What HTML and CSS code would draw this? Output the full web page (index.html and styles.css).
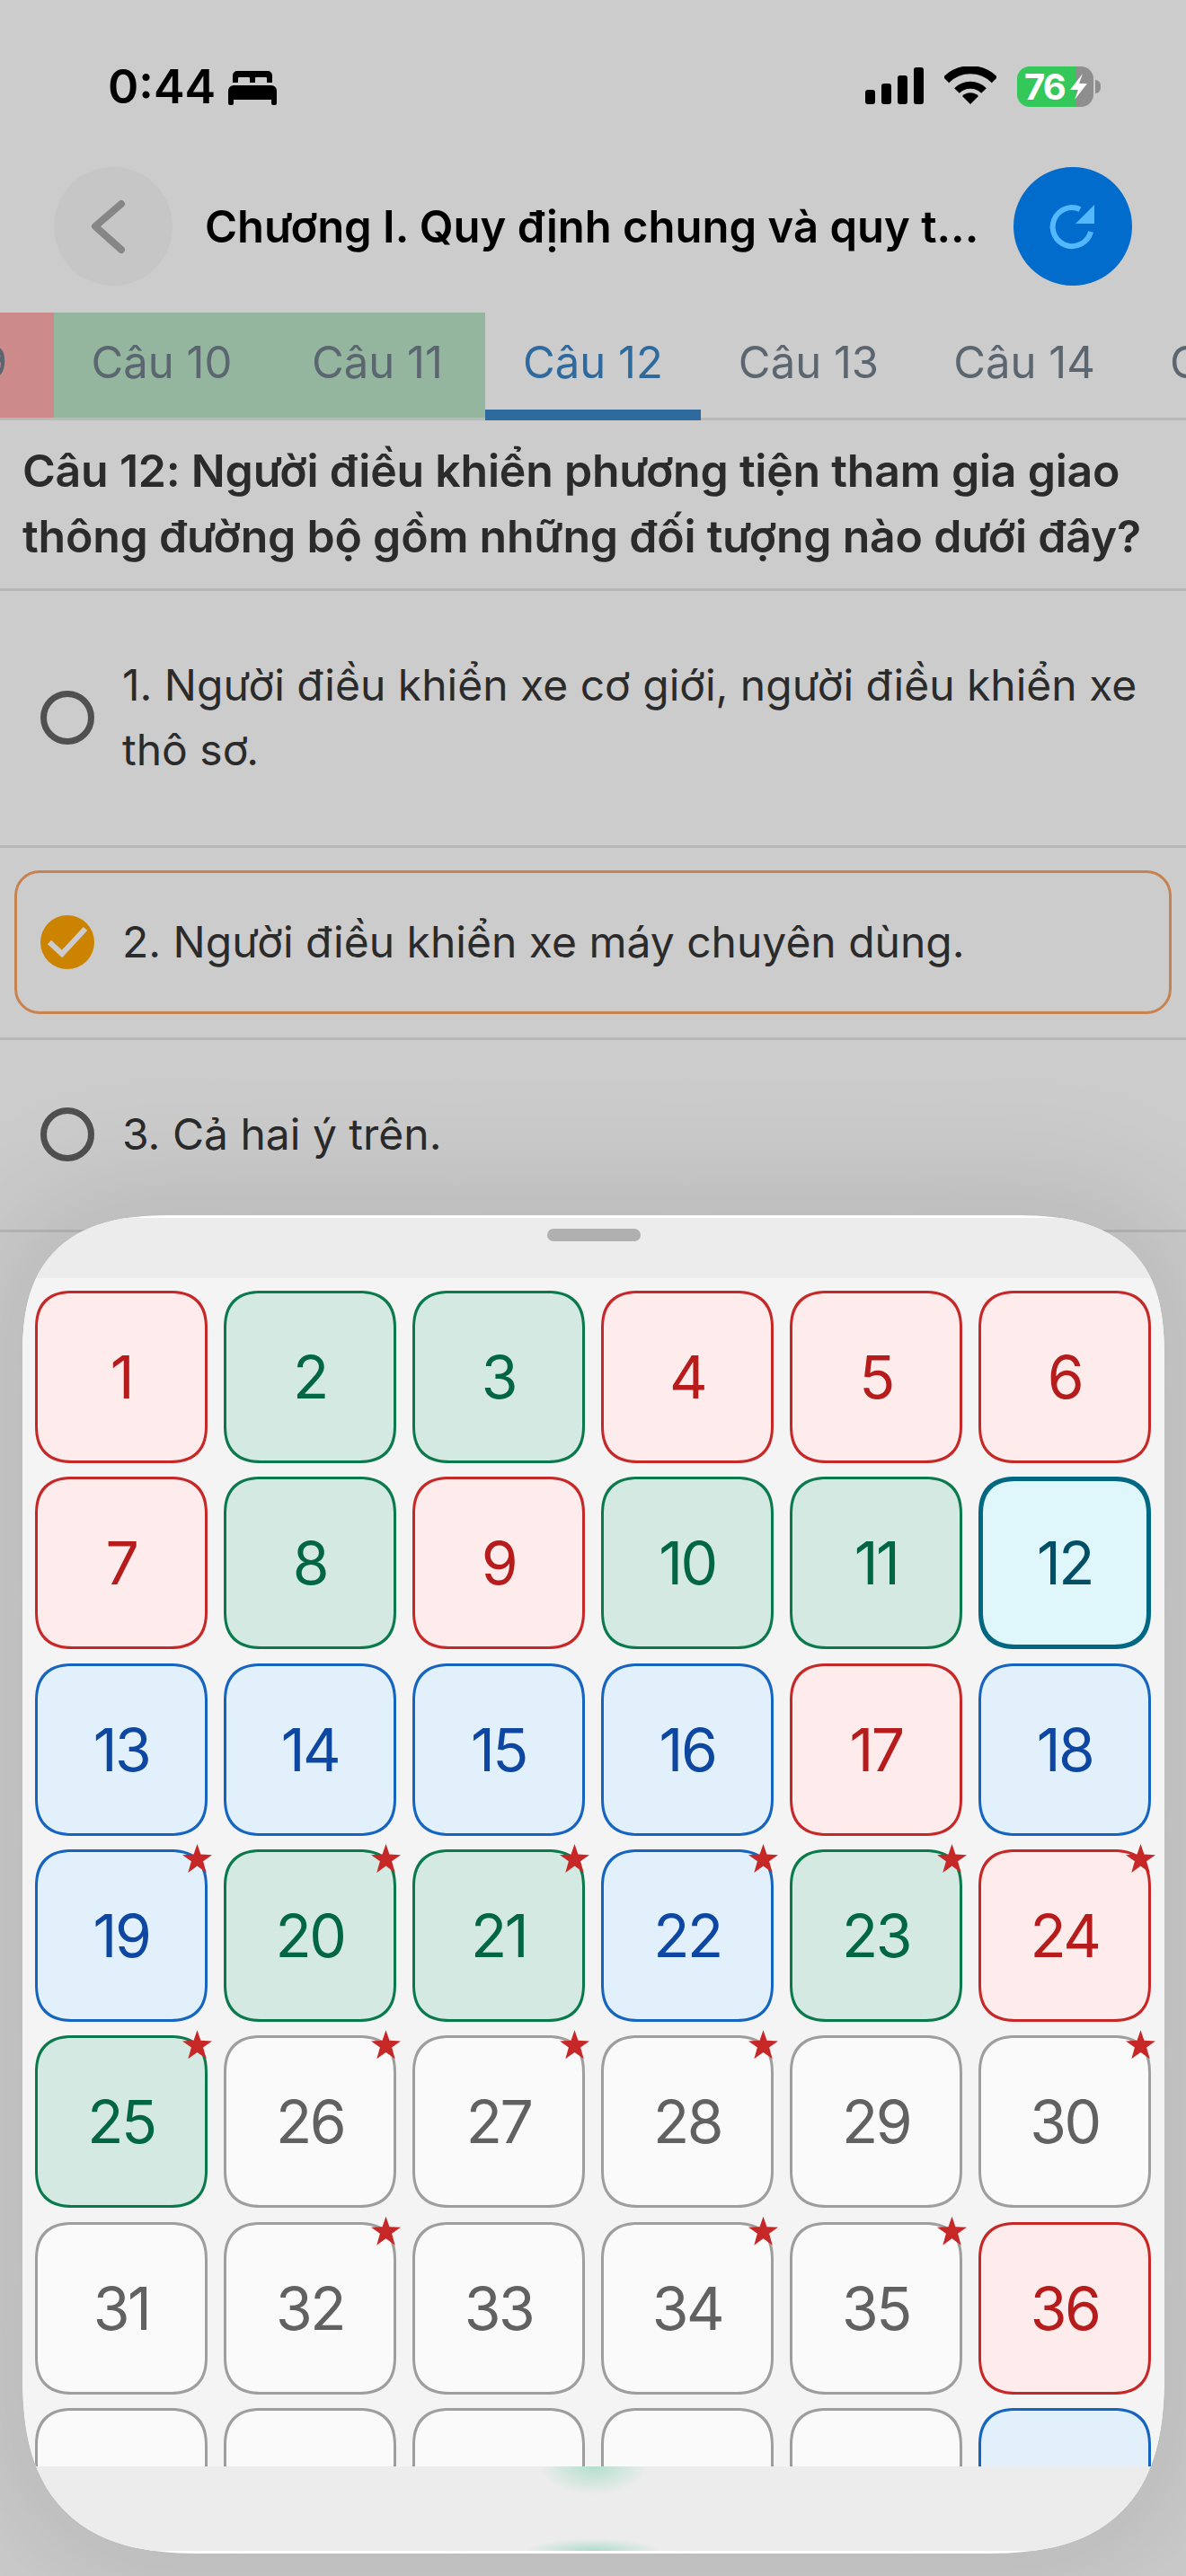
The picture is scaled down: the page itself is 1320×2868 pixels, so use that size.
FILE: index.html
```html
<!DOCTYPE html>
<html lang="vi">
<head>
  <meta charset="UTF-8">
  <title>Chương I. Quy định chung</title>
  <link rel="stylesheet" href="styles.css">
</head>
<body>
  <div class="status-bar">
    <div class="status-left">
      <span class="time">0:44</span>
      <svg class="bed" width="54" height="38" viewBox="0 0 54 38">
        <path fill-rule="evenodd" d="M10 0h34a5 5 0 0 1 5 5v8h-6V8a1 1 0 0 0-1-1H31a1 1 0 0 0-1 1v5h-6V8a1 1 0 0 0-1-1H12a1 1 0 0 0-1 1v5H5V5a5 5 0 0 1 5-5z"/>
        <path d="M6 16h42a6 6 0 0 1 6 6v14a2 2 0 0 1-2 2h-2a2 2 0 0 1-2-2v-4H6v4a2 2 0 0 1-2 2H2a2 2 0 0 1-2-2V22a6 6 0 0 1 6-6z"/>
      </svg>
    </div>
    <div class="status-right">
      <svg width="65" height="41" viewBox="0 0 65 41">
        <rect x="0" y="25" width="11" height="16" rx="3"/>
        <rect x="18" y="18" width="11" height="23" rx="3"/>
        <rect x="36" y="9" width="11" height="32" rx="3"/>
        <rect x="54" y="0" width="11" height="41" rx="3"/>
      </svg>
      <svg class="wifi" width="58" height="42" viewBox="0 0 58 42">
        <path d="M2 15A38 38 0 0 1 56 15" fill="none" stroke="#000" stroke-width="9"/>
        <path d="M14 27A21 21 0 0 1 44 27" fill="none" stroke="#000" stroke-width="8"/>
        <path d="M29 42L20 33A12.7 12.7 0 0 1 38 33Z"/>
      </svg>
      <div class="battery">
        <span class="battery-level">76</span>
        <svg class="bolt" width="85" height="45" viewBox="0 0 85 45">
          <path d="M73 8L59 26H68L64 37L78 19H69Z" fill="#fff"/>
        </svg>
        <i class="battery-nib"></i>
      </div>
    </div>
  </div>

  <div class="nav">
    <div class="round-btn back">
      <svg width="132" height="132" viewBox="0 0 132 132">
        <path d="M75 41L46 66L75 92" fill="none" stroke="#868686" stroke-width="8" stroke-linecap="round" stroke-linejoin="round"/>
      </svg>
    </div>
    <div class="nav-title">Chương I. Quy định chung và quy t...</div>
    <div class="round-btn refresh">
      <svg width="132" height="132" viewBox="0 0 132 132">
        <path d="M86 72A21.5 21.5 0 1 1 74 47" fill="none" stroke="#54b8ff" stroke-width="6"/>
        <path d="M69 63L90 42V63Z" fill="#54b8ff"/>
      </svg>
    </div>
  </div>

  <div class="tabs">
    <div class="tab tab-wrong">Câu 9</div>
    <div class="tab tab-right">Câu 10</div>
    <div class="tab tab-right">Câu 11</div>
    <div class="tab tab-active">Câu 12</div>
    <div class="tab">Câu 13</div>
    <div class="tab">Câu 14</div>
    <div class="tab">Câu 15</div>
  </div>

  <div class="question">Câu 12: Người điều khiển phương tiện tham gia giao thông đường bộ gồm những đối tượng nào dưới đây?</div>

  <div class="answer">
    <div class="option">
      <span class="radio"></span>
      <span class="option-text">1. Người điều khiển xe cơ giới, người điều khiển xe thô sơ.</span>
    </div>
  </div>
  <div class="answer">
    <div class="option selected">
      <svg class="check" width="60" height="60" viewBox="0 0 60 60">
        <circle cx="30" cy="30" r="30" fill="#cc8400"/>
        <path d="M10 30L24 43L50 15" fill="none" stroke="#cccccc" stroke-width="6"/>
      </svg>
      <span class="option-text">2. Người điều khiển xe máy chuyên dùng.</span>
    </div>
  </div>
  <div class="answer">
    <div class="option">
      <span class="radio"></span>
      <span class="option-text">3. Cả hai ý trên.</span>
    </div>
  </div>

  <div class="sheet">
    <div class="sheet-head"><div class="grabber"></div></div>
    <div class="sheet-body">
      <div class="cell red">1</div>
      <div class="cell green">2</div>
      <div class="cell green">3</div>
      <div class="cell red">4</div>
      <div class="cell red">5</div>
      <div class="cell red">6</div>
      <div class="cell red">7</div>
      <div class="cell green">8</div>
      <div class="cell red">9</div>
      <div class="cell green">10</div>
      <div class="cell green">11</div>
      <div class="cell current">12</div>
      <div class="cell blue">13</div>
      <div class="cell blue">14</div>
      <div class="cell blue">15</div>
      <div class="cell blue">16</div>
      <div class="cell red">17</div>
      <div class="cell blue">18</div>
      <div class="cell blue">19<i class="star"></i></div>
      <div class="cell green">20<i class="star"></i></div>
      <div class="cell green">21<i class="star"></i></div>
      <div class="cell blue">22<i class="star"></i></div>
      <div class="cell green">23<i class="star"></i></div>
      <div class="cell red">24<i class="star"></i></div>
      <div class="cell green">25<i class="star"></i></div>
      <div class="cell">26<i class="star"></i></div>
      <div class="cell">27<i class="star"></i></div>
      <div class="cell">28<i class="star"></i></div>
      <div class="cell">29</div>
      <div class="cell">30<i class="star"></i></div>
      <div class="cell">31</div>
      <div class="cell">32<i class="star"></i></div>
      <div class="cell">33</div>
      <div class="cell">34<i class="star"></i></div>
      <div class="cell">35<i class="star"></i></div>
      <div class="cell red">36</div>
      <div class="cell"></div>
      <div class="cell"></div>
      <div class="cell"></div>
      <div class="cell"></div>
      <div class="cell"></div>
      <div class="cell blue"></div>
    </div>
    <div class="sheet-foot"></div>
  </div>
</body>
</html>
```

FILE: styles.css
```css
body {
  margin: 0;
  width: 1320px;
  height: 2868px;
  overflow: hidden;
  position: relative;
  background: #cccccc;
  font-family: Inter, "Noto Sans", sans-serif;
  color: #2b2b2b;
}

/* status bar */
.status-bar {
  height: 186px;
  box-sizing: border-box;
  padding: 74px 103px 0 120px;
  display: flex;
  justify-content: space-between;
  align-items: flex-start;
}
.status-left {
  display: flex;
  align-items: flex-start;
  gap: 14px;
}
.time {
  font-size: 52px;
  font-weight: 600;
  line-height: 46px;
  color: #000;
}
.bed {
  margin-top: 5px;
}
.status-right {
  display: flex;
  align-items: flex-start;
  gap: 23px;
  padding-top: 1px;
}
.wifi {
  margin-top: -1px;
}
.battery {
  position: relative;
  width: 85px;
  height: 45px;
  margin-top: -1px;
  border-radius: 14px;
  background: linear-gradient(90deg, #34c759 65px, #8e8e8e 65px);
  color: #fff;
  font-size: 40px;
  font-weight: 700;
  line-height: 45px;
  letter-spacing: -2px;
}
.battery-level {
  margin-left: 8px;
}
.bolt {
  position: absolute;
  left: 0;
  top: 0;
}
.battery-nib {
  position: absolute;
  left: 87px;
  top: 15px;
  width: 6px;
  height: 15px;
  border-radius: 0 6px 6px 0;
  background: #8e8e8e;
}

/* nav */
.nav {
  display: flex;
  align-items: center;
  padding: 0 60px;
  height: 132px;
}
.round-btn {
  width: 132px;
  height: 132px;
  border-radius: 50%;
  flex: none;
}
.round-btn svg {
  display: block;
}
.back {
  background: #c6c6c6;
}
.refresh {
  background: #016ccb;
}
.nav-title {
  flex: 1;
  padding-left: 36px;
  font-size: 49px;
  font-weight: 600;
  color: #000;
  white-space: nowrap;
}

/* tabs */
.tabs {
  display: flex;
  margin: 30px 0 0 -180px;
  width: 1680px;
  height: 120px;
  box-sizing: border-box;
  border-bottom: 3px solid #b8b8b8;
}
.tab {
  width: 240px;
  flex: none;
  height: 117px;
  box-sizing: border-box;
  padding-top: 27px;
  text-align: center;
  font-size: 49px;
  line-height: 58px;
  color: #5c6670;
}
.tab-wrong {
  background: #cc8a8a;
}
.tab-right {
  background: #94b59e;
}
.tab-active {
  color: #2f6a9f;
  height: 120px;
  border-bottom: 12px solid #2f6a9f;
}

/* question and answers */
.question {
  padding: 20px 25px 21px;
  font-size: 50px;
  font-weight: 600;
  line-height: 73px;
  letter-spacing: -0.22px;
  border-bottom: 3px solid #b8b8b8;
}
.answer {
  padding: 25px 16px 26px;
  border-bottom: 3px solid #b8b8b8;
}
.option {
  display: flex;
  align-items: center;
  gap: 31px;
  padding: 41px 26px;
  border: 3px solid transparent;
  border-radius: 28px;
}
.option.selected {
  border-color: #c6824f;
}
.radio {
  width: 60px;
  height: 60px;
  box-sizing: border-box;
  flex: none;
  border: 7px solid #505050;
  border-radius: 50%;
}
.check {
  flex: none;
}
.option-text {
  font-size: 48px;
  line-height: 72px;
}

/* question grid sheet */
.sheet {
  position: absolute;
  left: 25px;
  top: 1353px;
  width: 1271px;
  height: 1490px;
  border-radius: 170px 170px 205px 205px / 160px 160px 205px 205px;
  corner-shape: superellipse(1.4);
  background: #fff;
  overflow: hidden;
  box-shadow: 0 0 140px 30px rgba(0, 0, 0, 0.1);
  display: flex;
  flex-direction: column;
}
.sheet-head {
  height: 67px;
  flex: none;
  margin: 3px 3px 0;
  background: #ececec;
  border-radius: 168px 168px 0 0 / 158px 158px 0 0;
  corner-shape: superellipse(1.4);
  display: flex;
  justify-content: center;
  padding-top: 12px;
  box-sizing: border-box;
}
.grabber {
  width: 104px;
  height: 14px;
  border-radius: 7px;
  background: #b0b0b0;
}
.sheet-body {
  height: 1323px;
  flex: none;
  box-sizing: border-box;
  padding: 14px 14px 0;
  background: #f4f4f4;
  overflow: hidden;
  display: grid;
  grid-template-columns: repeat(6, 192px);
  grid-auto-rows: 192px;
  column-gap: 18px;
  row-gap: 15.33px;
}
.sheet-foot {
  flex: 1;
  margin: 0 3px 3px;
  border-radius: 0 0 202px 202px;
  corner-shape: superellipse(1.4);
  background:
    radial-gradient(ellipse 60px 32px at 50% 0, #b4dfce, rgba(180, 223, 206, 0) 100%),
    radial-gradient(ellipse 75px 14px at 50% 100%, #aedccb, rgba(174, 220, 203, 0) 100%),
    #ececec;
}
.cell {
  position: relative;
  display: flex;
  align-items: center;
  justify-content: center;
  box-sizing: border-box;
  border: 3px solid #9e9e9e;
  border-radius: 42px;
  corner-shape: superellipse(1.3);
  background: #fafafa;
  color: #616161;
  font-size: 66px;
  letter-spacing: -2.5px;
}
.cell.red {
  border-color: #c62828;
  background: #fdeceb;
  color: #b71c1c;
}
.cell.green {
  border-color: #0a7a4c;
  background: #d4e9e2;
  color: #006644;
}
.cell.blue {
  border-color: #1565c0;
  background: #e2f0fb;
  color: #0d47a1;
}
.cell.current {
  border: 5px solid #006782;
  background: #dff6fa;
  color: #004f66;
}
.star {
  position: absolute;
  right: -8px;
  top: -9px;
  width: 33px;
  height: 32px;
  background: #c62828;
  clip-path: polygon(50% 0, 62% 36%, 100% 38%, 70% 60%, 81% 100%, 50% 77%, 19% 100%, 30% 60%, 0 38%, 38% 36%);
}
```
